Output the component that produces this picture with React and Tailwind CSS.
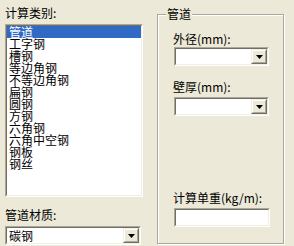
import React from "react";

const items = ["管道", "工字钢", "槽钢", "等边角钢", "不等边角钢", "扁钢", "圆钢", "方钢", "六角钢", "六角中空钢", "钢板", "钢丝"];

function Arrow() {
  return (
    <svg width="7" height="4" viewBox="0 0 7 4">
      <polygon points="0,0 7,0 3.5,4" fill="#000" />
    </svg>
  );
}

function Combo({ className, text }) {
  return (
    <div className={"h-[19px] border border-t-[#aca899] border-l-[#aca899] border-b-white border-r-white " + className}>
      <div className="h-full flex border border-t-[#716f64] border-l-[#716f64] border-b-[#f1efe2] border-r-[#f1efe2] bg-white">
        <div className="flex-1 pl-[2px] leading-[15px] text-[12px]">{text}</div>
        <div className="w-[16px] h-full border border-t-[#f1efe2] border-l-[#f1efe2] border-b-[#716f64] border-r-[#716f64]">
          <div className="h-full flex items-center justify-center bg-[#ece9d8] border border-t-white border-l-white border-b-[#aca899] border-r-[#aca899]">
            <Arrow />
          </div>
        </div>
      </div>
    </div>
  );
}

export default function App() {
  return (
    <div className="w-[294px] h-[246px] bg-[#ece9d8] flex text-black font-['Noto_Sans_CJK_SC',sans-serif] text-[12px] leading-[12px] overflow-hidden">
      <div className="ml-[5px] w-[138px] flex flex-col">
        <div className="mt-[7px] h-[12px] whitespace-nowrap">计算类别:</div>
        <div className="mt-[5px] h-[173px] border border-t-[#aca899] border-l-[#aca899] border-b-white border-r-white">
          <div className="h-full border border-t-[#716f64] border-l-[#716f64] border-b-[#f1efe2] border-r-[#f1efe2] bg-white flex flex-col">
            {items.map((it, i) => (
              <div
                key={it}
                className={
                  i === 0
                    ? "h-[12px] pl-[2px] whitespace-nowrap bg-[#316ac5] text-white"
                    : "h-[12px] pl-[2px] whitespace-nowrap"
                }
              >
                {it}
              </div>
            ))}
          </div>
        </div>
        <div className="mt-[12px] h-[12px] whitespace-nowrap">管道材质:</div>
        <Combo className="mt-[5px] w-[136px]" text="碳钢" />
      </div>

      <div className="relative ml-[14px] mt-[14px] w-[127px] h-[230px] border border-[#aca899] shadow-[inset_1px_1px_0_#fff,1px_1px_0_#fff] flex flex-col">
        <div className="absolute left-[8px] top-[-7px] px-[1px] bg-[#ece9d8] h-[12px] whitespace-nowrap">管道</div>
        <div className="ml-[15px] mt-[18px] h-[12px] whitespace-nowrap">外径(mm):</div>
        <Combo className="ml-[16px] mt-[2px] w-[95px]" text="" />
        <div className="ml-[15px] mt-[15px] h-[12px] whitespace-nowrap">壁厚(mm):</div>
        <Combo className="ml-[16px] mt-[4px] w-[95px]" text="" />
        <div className="ml-[15px] mt-[76px] h-[12px] whitespace-nowrap">计算单重(kg/m):</div>
        <div className="ml-[16px] mt-[4px] w-[96px] h-[19px] border border-t-[#aca899] border-l-[#aca899] border-b-white border-r-white">
          <div className="h-full border border-t-[#716f64] border-l-[#716f64] border-b-[#f1efe2] border-r-[#f1efe2] bg-white" />
        </div>
      </div>
    </div>
  );
}
